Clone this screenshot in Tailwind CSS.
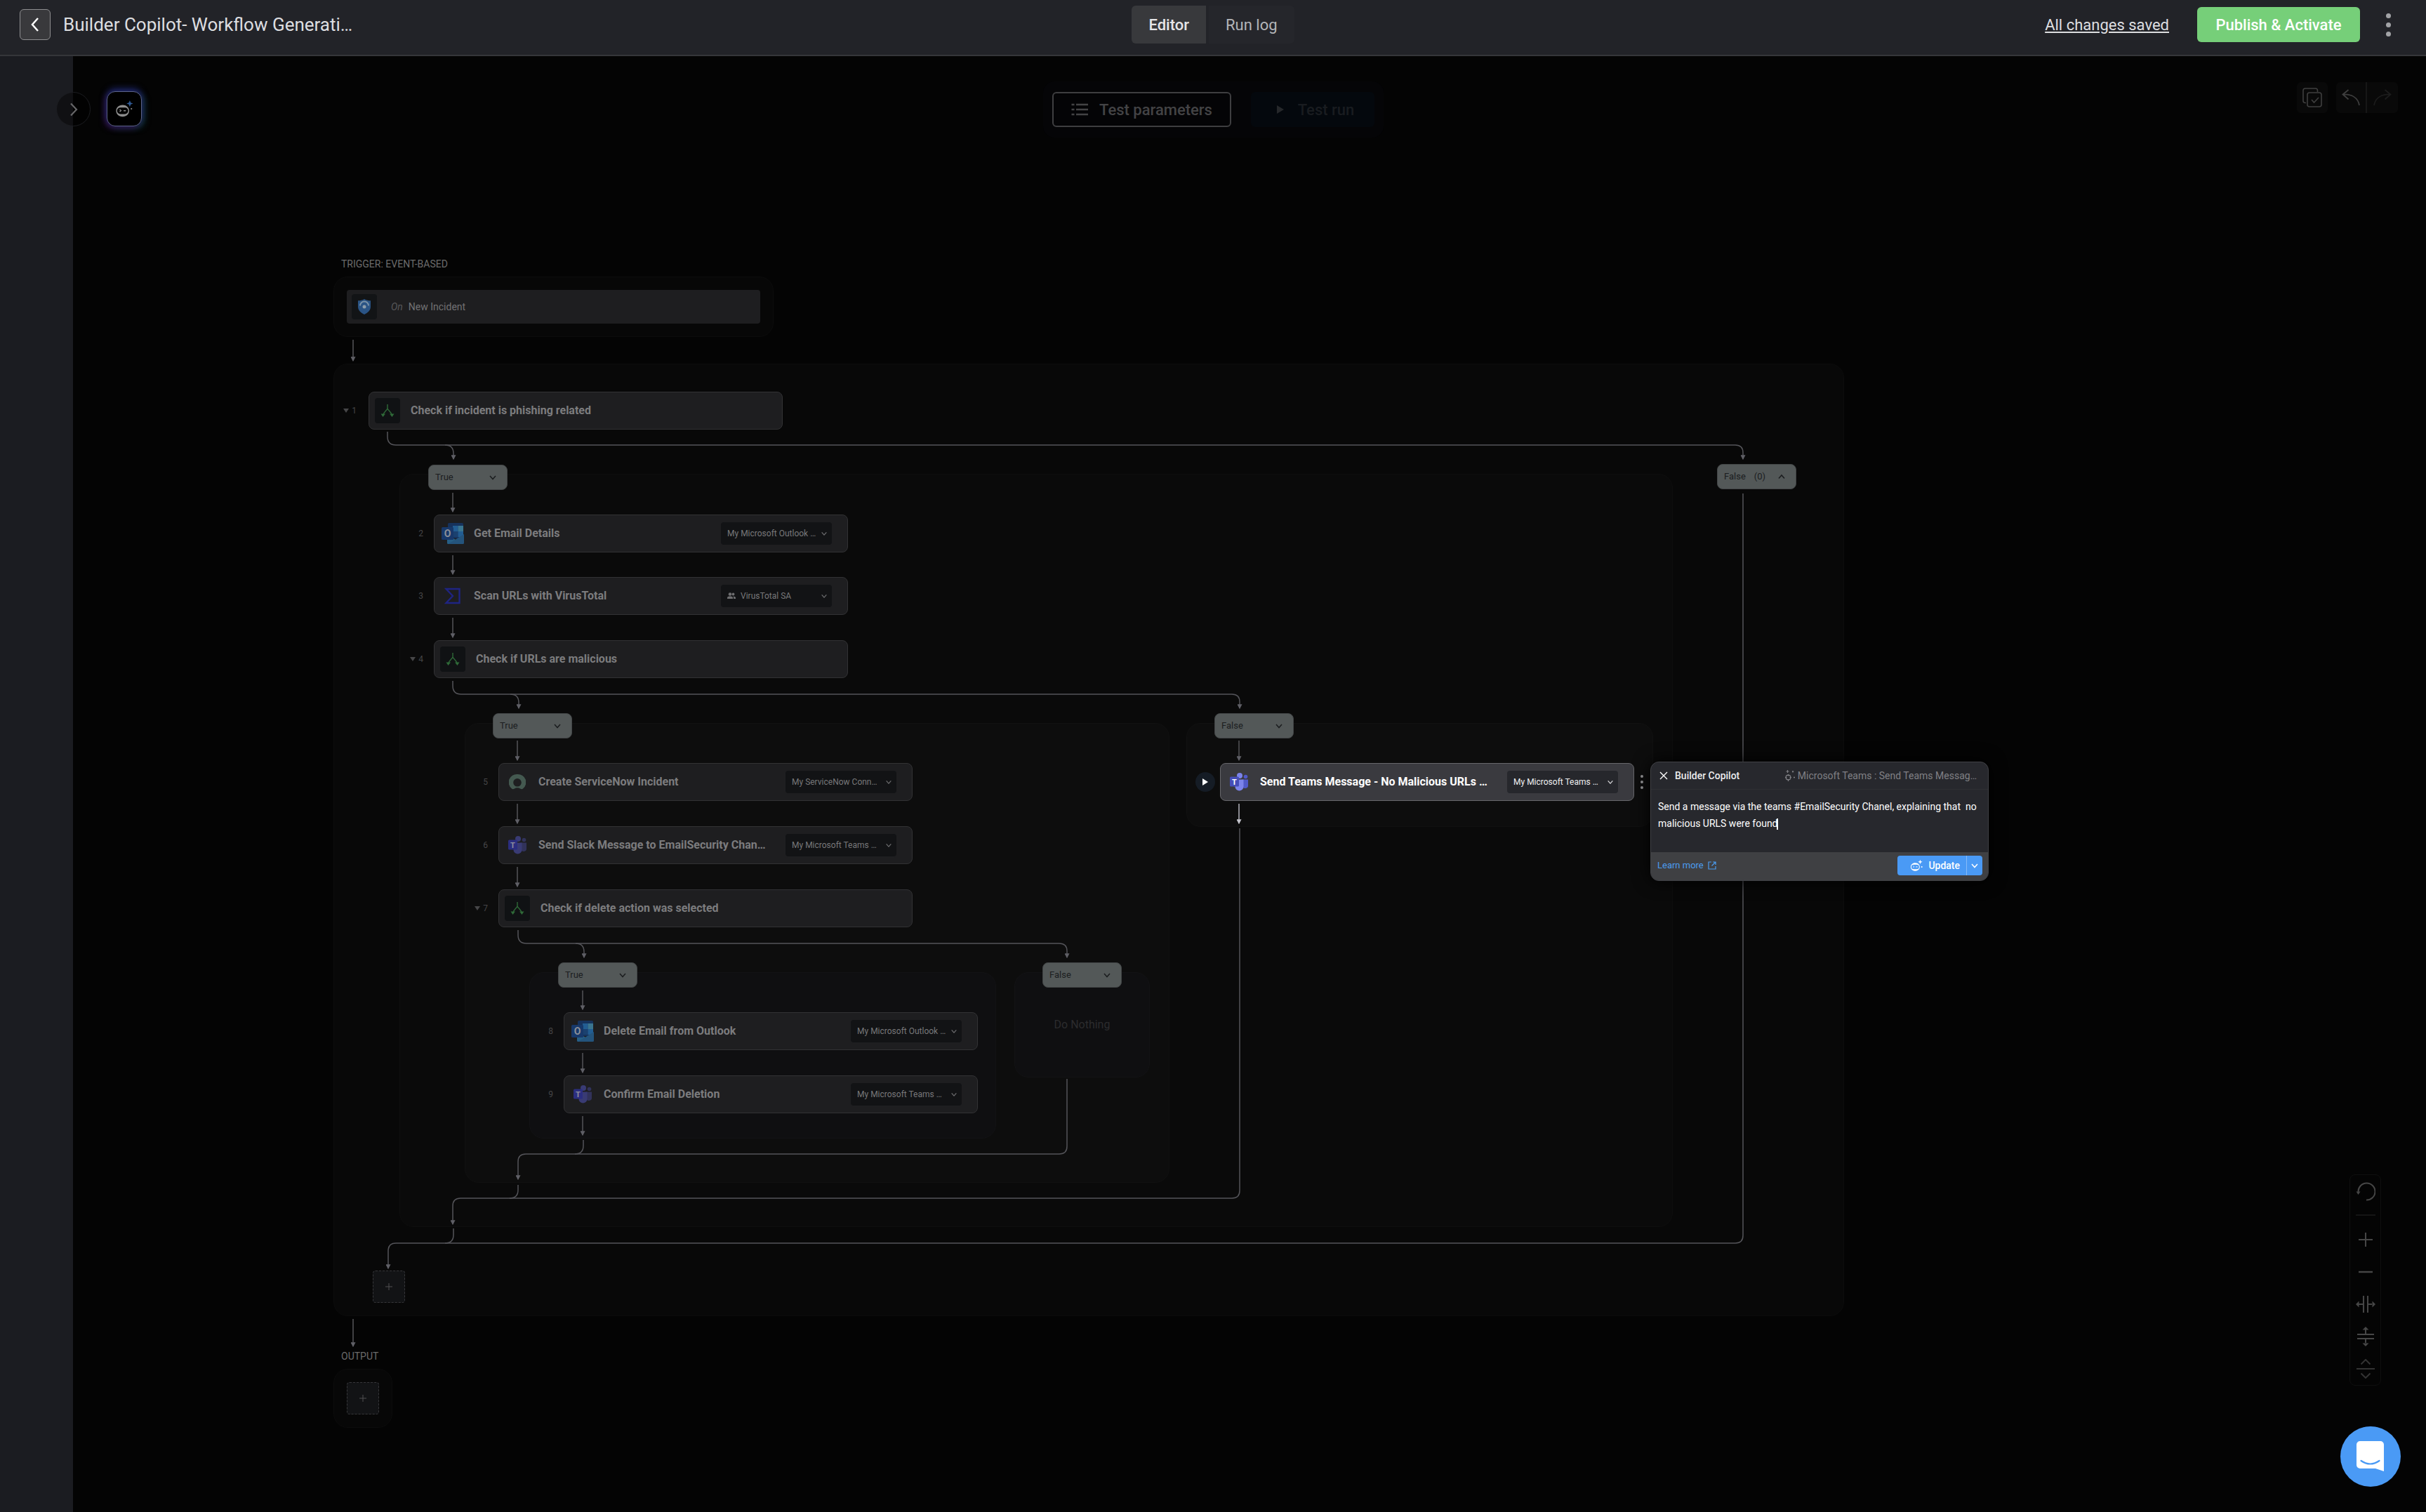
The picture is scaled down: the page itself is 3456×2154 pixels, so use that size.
<!DOCTYPE html>
<html lang="en">
<head>
    <meta charset="UTF-8">
    <meta name="viewport" content="width=device-width, initial-scale=1.0">
    <title>Workflow Builder</title>
    <script src="https://cdn.jsdelivr.net/npm/@tailwindcss/browser@4"></script>
</head>
<body class="flex flex-col min-h-screen bg-[#040404] font-[Roboto,sans-serif] text-white">

    <!-- icon sprite -->
    <svg class="hidden">
        <symbol id="i-down" viewBox="0 0 12 12"><path d="M2 4l4 4.500 4-4.500" fill="none" stroke="currentColor" stroke-width="1.500"/></symbol>
        <symbol id="i-up" viewBox="0 0 12 12"><path d="M2 8.500l4-4.500 4 4.500" fill="none" stroke="currentColor" stroke-width="1.500"/></symbol>
        <symbol id="i-fold" viewBox="0 0 8 6"><path d="M0 0h8L4 6z" fill="currentColor"/></symbol>
        <symbol id="i-branch" viewBox="0 0 20 20">
            <path d="M10 1v6M10 7C9 10 5 11 3.500 17M10 7c1 3 5 4 6.500 10" fill="none" stroke="#2f6a38" stroke-width="1.400"/>
            <path d="M0.500 14.500h6.500L3.500 19zM13 14.500h6.500L16.500 19z" fill="#2f6a38"/>
        </symbol>
        <symbol id="i-outlook" viewBox="0 0 32 32">
            <rect x="9" y="1" width="22" height="22" rx="1.500" fill="#16325c"/>
            <rect x="16" y="5" width="7.500" height="8" fill="#225d92"/>
            <rect x="23.500" y="5" width="7.500" height="8" fill="#3a7590"/>
            <rect x="16" y="13" width="7.500" height="8" fill="#1b416f"/>
            <rect x="23.500" y="13" width="7.500" height="8" fill="#225d92"/>
            <path d="M8 18l23 13H9.500A1.500 1.500 0 0 1 8 29.500z" fill="#265f86"/>
            <path d="M32 17v12.500a1.500 1.500 0 0 1-1.500 1.500H9.500L32 17z" fill="#24547c"/>
            <rect x="0" y="7" width="17" height="18" rx="1.500" fill="#17386a"/>
            <text x="8.500" y="21" text-anchor="middle" font-family="Roboto" font-size="14" font-weight="700" fill="#8b8f98">O</text>
        </symbol>
        <symbol id="i-teams" viewBox="0 0 26 26">
            <g fill="currentColor">
                <circle cx="14" cy="4" r="4"/>
                <circle cx="22.500" cy="5.500" r="2.800" opacity="0.7"/>
                <path d="M18 9.500h8v8a4 4 0 0 1-8 1z" opacity="0.7"/>
                <path d="M7.500 9.500h12v10a6 6 0 0 1-12 0z"/>
            </g>
            <rect x="0" y="5.500" width="13" height="14" rx="1.500" fill="#2b2e80"/>
            <text x="6.500" y="16.500" text-anchor="middle" font-family="Roboto" font-size="11" font-weight="700" fill="#8e8e9c">T</text>
        </symbol>
        <symbol id="i-bot" viewBox="0 0 28 28">
            <path fill-rule="evenodd" d="M11.500 8C5.500 8 1.500 12 1.500 17S5.500 26 11.500 26s10-4 10-9c0-2-.7-3.500-1.600-5C17.500 9 15 8 11.500 8zM8 12h7a5 5 0 0 1 0 10H8a5 5 0 0 1 0-10z" fill="currentColor"/>
            <path d="M7 15l2 1.800-2 1.700M13 17h3.500" fill="none" stroke="currentColor" stroke-width="1.500"/>
        </symbol>
        <symbol id="i-virustotal" viewBox="0 0 24 24"><path d="M2.500 2h19v20h-19l9.500-10z" fill="none" stroke="#1f2482" stroke-width="2.400"/></symbol>
        <symbol id="i-servicenow" viewBox="0 0 24 24">
            <path fill-rule="evenodd" d="M12 1a11.500 11.500 0 0 0-8 20.500c1 .9 2.300.9 3.500.2a8.500 8.500 0 0 1 9 0c1.200.7 2.500.7 3.500-.2A11.500 11.500 0 0 0 12 1zM12 7a5.800 5.800 0 1 1 0 11.600A5.800 5.800 0 0 1 12 7z" fill="#445950"/>
        </symbol>
    </svg>

    <header class="grid grid-cols-3 items-center h-20 pb-2 px-7 bg-[#222328] border-b-2 border-[#35363a]">
        <div class="flex items-center gap-[18px]">
            <button aria-label="Back" class="flex items-center justify-center size-11 rounded-md bg-[#39393c] border border-[#8e8e90]">
                <svg class="size-6" viewBox="0 0 24 24" fill="none" stroke="white" stroke-width="2.500"><path d="M16 3L8 12l8 9"/></svg>
            </button>
            <h1 class="text-[26px] leading-8 text-[#dddee0]">Builder Copilot- Workflow Generati…</h1>
        </div>
        <nav class="flex justify-center gap-1">
            <button class="h-[54px] px-6 rounded-l-md bg-[#38393c] text-[22px] font-medium text-[#e6e6e8]">Editor</button>
            <button class="h-[54px] px-6 rounded-r-md bg-[#25262b] text-[22px] text-[#b4b5b9]">Run log</button>
        </nav>
        <div class="flex items-center justify-end pr-4">
            <a href="#" class="mr-10 text-[22px] text-[#dddee0] underline underline-offset-2 decoration-2">All changes saved</a>
            <button class="h-[50px] w-[232px] mr-[30px] rounded-md bg-[#76cf79] text-[22px] font-medium">Publish &amp; Activate</button>
            <button aria-label="More" class="flex flex-col items-center gap-[6px] w-5">
                <i class="size-[7px] rounded-full bg-[#a2a3a6]"></i>
                <i class="size-[7px] rounded-full bg-[#a2a3a6]"></i>
                <i class="size-[7px] rounded-full bg-[#a2a3a6]"></i>
            </button>
        </div>
    </header>

    <div class="flex flex-1">
        <aside class="w-[104px] shrink-0 bg-[#1b1c21]"></aside>

        <main class="relative flex-1 min-h-[2074px]">

            <!-- canvas controls -->
            <button aria-label="Expand sidebar" class="absolute -left-6 top-[51px] flex items-center justify-center size-[49px] rounded-full bg-black/40 border border-[#1c1d21]">
                <svg class="size-6" viewBox="0 0 24 24" fill="none" stroke="#666668" stroke-width="2.200"><path d="M8 3.500l8 8.500-8 8.500"/></svg>
            </button>
            <button aria-label="Builder Copilot" class="absolute left-12 top-[50px] flex items-center justify-center size-[50px] rounded-xl bg-black border border-[#5c6488] shadow-[0_-4px_10px_#1d2568,-3px_3px_9px_#2d0f44,4px_3px_9px_#103438]">
                <svg class="size-[26px] text-[#8d8d8d]" viewBox="0 0 28 28">
                    <use href="#i-bot"/>
                    <path d="M22.500 1l1.400 3.600 3.600 1.400-3.600 1.400-1.400 3.600-1.400-3.600L17.500 6l3.600-1.400z" fill="#2f5a94"/>
                    <circle cx="25" cy="14" r="1.200" fill="#8d8d8d"/>
                </svg>
            </button>

            <div class="absolute left-[1382px] top-9 flex items-center gap-7 h-20 px-[13px] rounded-2xl bg-[#050507]">
                <button class="flex items-center justify-center gap-4 w-[255px] h-[50px] rounded-md bg-[#040406] border-2 border-[#3e3e40] text-[22px] font-medium text-[#434345]">
                    <svg class="w-6 h-5" viewBox="0 0 24 20" stroke="currentColor" stroke-width="2.400"><path d="M7 3h17M7 10h17M7 17h17M0.500 3h4M0.500 10h4M0.500 17h4"/></svg>
                    Test parameters
                </button>
                <button class="flex items-center justify-center gap-5 w-44 h-[50px] pl-2 rounded-md bg-[#04080d] text-[22px] font-medium text-[#191c20]">
                    <svg class="w-[10px] h-3" viewBox="0 0 10 12" fill="#26282b"><path d="M0 0l10 6-10 6z"/></svg>
                    Test run
                </button>
            </div>

            <div class="absolute right-10 top-[37px] flex gap-3 text-[#3f3f3f]">
                <button aria-label="Select steps" class="flex items-center justify-center size-11 rounded-md bg-[#090909]">
                    <svg class="size-7" viewBox="0 0 28 28" fill="none" stroke="currentColor" stroke-width="1.600"><path d="M5 21.500H4A3 3 0 0 1 1 18.500V4A3 3 0 0 1 4 1h14.500a3 3 0 0 1 3 3v2"/><rect x="7" y="7" width="20" height="20" rx="3"/><path d="M13 17l3.500 4 6.500-7"/></svg>
                </button>
                <div class="flex rounded-md bg-[#090909]">
                    <button aria-label="Undo" class="flex items-center justify-center size-11 border-r-2 border-[#171717]">
                        <svg class="size-[26px]" viewBox="0 0 26 26" fill="none" stroke="currentColor" stroke-width="1.800"><path d="M9.500 2L1.500 8.500l8 7M1.500 8.500C14 8 23 13 25 24"/></svg>
                    </button>
                    <button aria-label="Redo" disabled class="flex items-center justify-center size-11 text-[#1c1c1c]">
                        <svg class="size-[26px]" viewBox="0 0 26 26" fill="none" stroke="currentColor" stroke-width="1.800"><path d="M16.500 2l8 6.500-8 7M24.500 8.500C12 8 3 13 1 24"/></svg>
                    </button>
                </div>
            </div>

            <div class="absolute right-16 top-[1593px] flex flex-col items-center w-[45px] h-[301px] rounded-lg border border-[#0f0f0f] text-[#464646]">
                <button aria-label="Reset view" class="flex items-center justify-center h-[46px]">
                    <svg class="size-7" viewBox="0 0 28 28" fill="none" stroke="currentColor" stroke-width="2"><path d="M3.500 15A12 12 0 1 1 15 26.500"/><path d="M0.500 14.500h6l-3 4.500z" fill="currentColor" stroke="none"/></svg>
                </button>
                <hr class="w-7 my-[11px] border-t-2 border-[#151515]">
                <button aria-label="Zoom in" class="flex items-center justify-center h-[47px]">
                    <svg class="size-5" viewBox="0 0 20 20" stroke="currentColor" stroke-width="2"><path d="M10 0v20M0 10h20"/></svg>
                </button>
                <button aria-label="Zoom out" class="flex items-center justify-center h-[47px]">
                    <svg class="size-5" viewBox="0 0 20 20" stroke="currentColor" stroke-width="2.400"><path d="M0 10h20"/></svg>
                </button>
                <button aria-label="Spread horizontally" class="flex items-center justify-center h-[47px]">
                    <svg class="size-7" viewBox="0 0 28 28" fill="currentColor"><path d="M10 2h2v24h-2zM16 2h2v24h-2zM4 13h7v2H4zM17 13h7v2h-7zM0 14l4.500-4.500v9zM28 14l-4.500-4.500v9z"/></svg>
                </button>
                <button aria-label="Spread vertically" class="flex items-center justify-center h-[47px]">
                    <svg class="size-7 rotate-90" viewBox="0 0 28 28" fill="currentColor"><path d="M10 2h2v24h-2zM16 2h2v24h-2zM4 13h7v2H4zM17 13h7v2h-7zM0 14l4.500-4.500v9zM28 14l-4.500-4.500v9z"/></svg>
                </button>
                <button aria-label="Collapse all" class="flex items-center justify-center h-[47px] text-[#333333]">
                    <svg class="size-7" viewBox="0 0 28 28" fill="none" stroke="currentColor" stroke-width="2"><path d="M7.500 7.500L14 1l6.500 6.500M1 14h26M7.500 20.500L14 27l6.500-6.500"/></svg>
                </button>
            </div>

            <!-- nested scopes -->
            <div class="absolute left-[371px] top-[438px] w-[2152px] h-[1357px] rounded-[20px] bg-[#080808] border border-[#0c0c0c]"></div>
            <div class="absolute left-[465px] top-[595px] w-[1814px] h-[1073px] rounded-[20px] bg-[#0a0a0a] border border-[#0e0e0e]"></div>
            <div class="absolute left-[558px] top-[950px] w-[1004px] h-[655px] rounded-[20px] bg-[#0d0d0d] border border-[#111111]"></div>
            <div class="absolute left-[1586px] top-[950px] w-[665px] h-[148px] rounded-[20px] bg-[#0d0d0d] border border-[#111111]"></div>
            <div class="absolute left-[650px] top-[1305px] w-[665px] h-[237px] rounded-[20px] bg-[#0f0f11] border border-[#131315]"></div>
            <div class="absolute left-[1341px] top-[1305px] flex items-center justify-center w-[193px] h-[150px] rounded-[20px] bg-[#0f0f11] border border-[#131315] text-base text-[#2c2c2e]">Do Nothing</div>

            <!-- edges -->
            <svg class="absolute left-0 top-0 w-[2700px] h-[1860px]" viewBox="0 0 2700 1860" fill="none" stroke="#545459" stroke-width="1.500">
                <defs>
                    <marker id="arrow" viewBox="0 0 6 6" refX="5" refY="3" markerWidth="7" markerHeight="7" markerUnits="userSpaceOnUse" orient="auto"><path d="M0 0l6 3-6 3z" fill="#5f5f66" stroke="none"/></marker>
                    <marker id="arrow-lit" viewBox="0 0 6 6" refX="5" refY="3" markerWidth="7" markerHeight="7" markerUnits="userSpaceOnUse" orient="auto"><path d="M0 0l6 3-6 3z" fill="#c4c4cc" stroke="none"/></marker>
                </defs>
                <g marker-end="url(#arrow)">
                    <path d="M399 404v30"/>
                    <path d="M399 1799v39"/>
                    <path d="M541 622v27"/>
                    <path d="M541 711v27"/>
                    <path d="M541 800v28"/>
                    <path d="M633 975v28"/>
                    <path d="M633 1065v28"/>
                    <path d="M633 1155v28"/>
                    <path d="M726 1331v27"/>
                    <path d="M726 1420v28"/>
                    <path d="M726 1510v27"/>
                    <path d="M1661 975v28"/>
                    <path d="M448 535v7q0 12 12 12H2368q11 0 11 11v9"/>
                    <path d="M530 554q12 0 12 12v8"/>
                    <path d="M541 890v7q0 12 12 12H1651q11 0 11 11v9"/>
                    <path d="M623 909q12 0 12 12v8"/>
                    <path d="M634 1245v7q0 12 12 12H1405q11 0 11 11v9"/>
                    <path d="M716 1264q12 0 12 12v8"/>
                    <path d="M1416 1457v96q0 11-11 11H645q-11 0-11 11v25"/>
                    <path d="M1662 1100v516q0 11-11 11H552q-11 0-11 11v26"/>
                    <path d="M2379 623v1057q0 11-11 11H460q-11 0-11 11v25"/>
                </g>
                <path d="M727 1544v8q0 12-12 12M634 1608v7q0 12-12 12M542 1670v9q0 12-12 12"/>
                <path d="M1661 1065v28" stroke="#b4b4bc" marker-end="url(#arrow-lit)"/>
            </svg>

            <!-- trigger -->
            <h2 class="absolute left-[382px] top-[286px] text-sm text-[#6b6b6b]">TRIGGER: EVENT-BASED</h2>
            <div class="absolute left-[371px] top-[314px] flex items-center w-[627px] h-[86px] px-[18px] rounded-[20px] bg-[#070707] border border-[#0c0c0c]">
                <div class="flex items-center w-full h-12 px-[7px] rounded bg-[#1e1e20] text-sm">
                    <span class="flex items-center justify-center size-9 rounded bg-[#121416]">
                        <svg class="w-[18px] h-[22px]" viewBox="0 0 18 22"><path d="M9 0c3 2 6 2.200 9 2.200V11c0 5-4 8.500-9 11-5-2.500-9-6-9-11V2.200C3 2.200 6 2 9 0z" fill="#2a5485"/><path d="M3 9.500a6 6 0 0 1 12 0" fill="none" stroke="#7b93a8" stroke-width="1.800"/><circle cx="9" cy="11" r="2.500" fill="#8b9cab"/></svg>
                    </span>
                    <i class="ml-5 text-[#58585a]">On</i>
                    <span class="ml-2 text-[#727274]">New Incident</span>
                </div>
            </div>

            <!-- steps -->
            <div class="absolute left-[421px] top-[478px] flex items-center w-[590px] h-[54px] px-2 rounded-lg bg-[#1e1e20] border border-[#323234]">
                <span class="absolute right-full mr-[18px] flex items-center gap-1 text-xs text-[#464648]"><svg class="w-2 h-[6px]"><use href="#i-fold"/></svg>1</span>
                <span class="flex items-center justify-center size-9 rounded bg-[#101214]"><svg class="size-5"><use href="#i-branch"/></svg></span>
                <span class="ml-[15px] text-base font-bold text-[#7c7c7e]">Check if incident is phishing related</span>
            </div>

            <div class="absolute left-[514px] top-[653px] flex items-center w-[590px] h-[54px] pl-2 pr-[22px] rounded-lg bg-[#1e1e20] border border-[#323234]">
                <span class="absolute right-full mr-4 text-xs text-[#464648]">2</span>
                <span class="flex items-center justify-center size-9"><svg class="size-8"><use href="#i-outlook"/></svg></span>
                <span class="ml-3 text-base font-bold text-[#7c7c7e]">Get Email Details</span>
                <div class="relative ml-auto">
                    <select aria-label="Connection" class="appearance-none w-[158px] h-8 pl-[9px] rounded bg-[#121315] text-xs text-[#78787a]"><option>My Microsoft Outlook …</option></select>
                    <svg class="absolute right-[6px] top-[11px] size-[10px] text-[#6e6e70] pointer-events-none"><use href="#i-down"/></svg>
                </div>
            </div>

            <div class="absolute left-[514px] top-[742px] flex items-center w-[590px] h-[54px] pl-2 pr-[22px] rounded-lg bg-[#1e1e20] border border-[#323234]">
                <span class="absolute right-full mr-4 text-xs text-[#464648]">3</span>
                <span class="flex items-center justify-center size-9"><svg class="size-6"><use href="#i-virustotal"/></svg></span>
                <span class="ml-3 text-base font-bold text-[#7c7c7e]">Scan URLs with VirusTotal</span>
                <div class="relative ml-auto">
                    <svg class="absolute left-[9px] top-[11px] w-3 h-[10px] text-[#6e6e70] pointer-events-none" viewBox="0 0 12 10" fill="currentColor"><circle cx="4" cy="2.500" r="2.300"/><circle cx="8.500" cy="2.500" r="1.900"/><path d="M0 9V7.500C0 6 2 5.500 4 5.500S8 6 8 7.500V9zM9 9V7.300c0-.7-.3-1.200-.7-1.600C10.500 5.700 12 6.300 12 7.500V9z"/></svg>
                    <select aria-label="Connection" class="appearance-none w-[158px] h-8 pl-7 rounded bg-[#121315] text-xs text-[#78787a]"><option>VirusTotal SA</option></select>
                    <svg class="absolute right-[6px] top-[11px] size-[10px] text-[#6e6e70] pointer-events-none"><use href="#i-down"/></svg>
                </div>
            </div>

            <div class="absolute left-[514px] top-[832px] flex items-center w-[590px] h-[54px] px-2 rounded-lg bg-[#1e1e20] border border-[#323234]">
                <span class="absolute right-full mr-4 flex items-center gap-1 text-xs text-[#464648]"><svg class="w-2 h-[6px]"><use href="#i-fold"/></svg>4</span>
                <span class="flex items-center justify-center size-9 rounded bg-[#101214]"><svg class="size-5"><use href="#i-branch"/></svg></span>
                <span class="ml-[15px] text-base font-bold text-[#7c7c7e]">Check if URLs are malicious</span>
            </div>

            <div class="absolute left-[606px] top-[1007px] flex items-center w-[590px] h-[54px] pl-2 pr-[22px] rounded-lg bg-[#1e1e20] border border-[#323234]">
                <span class="absolute right-full mr-4 text-xs text-[#464648]">5</span>
                <span class="flex items-center justify-center size-9"><svg class="size-6"><use href="#i-servicenow"/></svg></span>
                <span class="ml-3 text-base font-bold text-[#7c7c7e]">Create ServiceNow Incident</span>
                <div class="relative ml-auto">
                    <select aria-label="Connection" class="appearance-none w-[158px] h-8 pl-[9px] rounded bg-[#121315] text-xs text-[#78787a]"><option>My ServiceNow Conn…</option></select>
                    <svg class="absolute right-[6px] top-[11px] size-[10px] text-[#6e6e70] pointer-events-none"><use href="#i-down"/></svg>
                </div>
            </div>

            <div class="absolute left-[606px] top-[1097px] flex items-center w-[590px] h-[54px] pl-2 pr-[22px] rounded-lg bg-[#1e1e20] border border-[#323234]">
                <span class="absolute right-full mr-4 text-xs text-[#464648]">6</span>
                <span class="flex items-center justify-center size-9"><svg class="size-[26px] text-[#393b74]"><use href="#i-teams"/></svg></span>
                <span class="ml-3 text-base font-bold text-[#7c7c7e]">Send Slack Message to EmailSecurity Chan…</span>
                <div class="relative ml-auto">
                    <select aria-label="Connection" class="appearance-none w-[158px] h-8 pl-[9px] rounded bg-[#121315] text-xs text-[#78787a]"><option>My Microsoft Teams …</option></select>
                    <svg class="absolute right-[6px] top-[11px] size-[10px] text-[#6e6e70] pointer-events-none"><use href="#i-down"/></svg>
                </div>
            </div>

            <div class="absolute left-[606px] top-[1187px] flex items-center w-[590px] h-[54px] px-2 rounded-lg bg-[#1e1e20] border border-[#323234]">
                <span class="absolute right-full mr-4 flex items-center gap-1 text-xs text-[#464648]"><svg class="w-2 h-[6px]"><use href="#i-fold"/></svg>7</span>
                <span class="flex items-center justify-center size-9 rounded bg-[#101214]"><svg class="size-5"><use href="#i-branch"/></svg></span>
                <span class="ml-[15px] text-base font-bold text-[#7c7c7e]">Check if delete action was selected</span>
            </div>

            <div class="absolute left-[699px] top-[1362px] flex items-center w-[590px] h-[54px] pl-2 pr-[22px] rounded-lg bg-[#1e1e20] border border-[#323234]">
                <span class="absolute right-full mr-4 text-xs text-[#464648]">8</span>
                <span class="flex items-center justify-center size-9"><svg class="size-8"><use href="#i-outlook"/></svg></span>
                <span class="ml-3 text-base font-bold text-[#7c7c7e]">Delete Email from Outlook</span>
                <div class="relative ml-auto">
                    <select aria-label="Connection" class="appearance-none w-[158px] h-8 pl-[9px] rounded bg-[#121315] text-xs text-[#78787a]"><option>My Microsoft Outlook …</option></select>
                    <svg class="absolute right-[6px] top-[11px] size-[10px] text-[#6e6e70] pointer-events-none"><use href="#i-down"/></svg>
                </div>
            </div>

            <div class="absolute left-[699px] top-[1452px] flex items-center w-[590px] h-[54px] pl-2 pr-[22px] rounded-lg bg-[#1e1e20] border border-[#323234]">
                <span class="absolute right-full mr-4 text-xs text-[#464648]">9</span>
                <span class="flex items-center justify-center size-9"><svg class="size-[26px] text-[#393b74]"><use href="#i-teams"/></svg></span>
                <span class="ml-3 text-base font-bold text-[#7c7c7e]">Confirm Email Deletion</span>
                <div class="relative ml-auto">
                    <select aria-label="Connection" class="appearance-none w-[158px] h-8 pl-[9px] rounded bg-[#121315] text-xs text-[#78787a]"><option>My Microsoft Teams …</option></select>
                    <svg class="absolute right-[6px] top-[11px] size-[10px] text-[#6e6e70] pointer-events-none"><use href="#i-down"/></svg>
                </div>
            </div>

            <!-- selected step -->
            <div class="absolute left-[1634px] top-[1007px] flex items-center w-[590px] h-[54px] pl-2 pr-[22px] rounded-lg bg-[#3a3a3f] border border-[#67676b]">
                <button aria-label="Run step" class="absolute right-full mr-2 flex items-center justify-center size-7 rounded-full bg-[#151c25]">
                    <svg class="w-2 h-[10px]" viewBox="0 0 8 10" fill="white"><path d="M0 0l8 5-8 5z"/></svg>
                </button>
                <span class="flex items-center justify-center size-9">
                    <svg class="size-[26px]" viewBox="0 0 26 26">
                        <circle cx="14" cy="4" r="4" fill="#7b83eb"/><circle cx="22.500" cy="5.500" r="2.800" fill="#5059c9"/>
                        <path d="M18 9.500h8v8a4 4 0 0 1-8 1z" fill="#5059c9"/><path d="M7.500 9.500h12v10a6 6 0 0 1-12 0z" fill="#7b83eb"/>
                        <rect y="5.500" width="13" height="14" rx="1.500" fill="#464eb8"/>
                        <text x="6.500" y="16.500" text-anchor="middle" font-family="Roboto" font-size="11" font-weight="700" fill="white">T</text>
                    </svg>
                </span>
                <span class="ml-3 text-base font-bold">Send Teams Message - No Malicious URLs …</span>
                <div class="relative ml-auto">
                    <select aria-label="Connection" class="appearance-none w-[158px] h-8 pl-[9px] rounded bg-[#26272c] text-xs text-[#f0f0f2]"><option>My Microsoft Teams …</option></select>
                    <svg class="absolute right-[6px] top-[11px] size-[10px] text-[#dcdcde] pointer-events-none"><use href="#i-down"/></svg>
                </div>
                <button aria-label="Step menu" class="absolute left-full ml-[10px] flex flex-col gap-1">
                    <i class="size-1 rounded-full bg-[#9a9a9c]"></i><i class="size-1 rounded-full bg-[#9a9a9c]"></i><i class="size-1 rounded-full bg-[#9a9a9c]"></i>
                </button>
            </div>

            <!-- branch toggles -->
            <button class="absolute left-[506px] top-[582px] flex items-center justify-between w-[113px] h-9 pl-[9px] pr-[14px] rounded-lg bg-[#535858] border border-[#424546] text-[13px] text-[#1b1d1f]">True <svg class="size-3"><use href="#i-down"/></svg></button>
            <button class="absolute left-[2342px] top-[581px] flex items-center w-[113px] h-9 pl-[9px] pr-[14px] rounded-lg bg-[#535858] border border-[#424546] text-[13px] text-[#1b1d1f]">False <span class="ml-3">(0)</span> <svg class="size-3 ml-auto"><use href="#i-up"/></svg></button>
            <button class="absolute left-[598px] top-[936px] flex items-center justify-between w-[113px] h-9 pl-[9px] pr-[14px] rounded-lg bg-[#535858] border border-[#424546] text-[13px] text-[#1b1d1f]">True <svg class="size-3"><use href="#i-down"/></svg></button>
            <button class="absolute left-[1626px] top-[936px] flex items-center justify-between w-[113px] h-9 pl-[9px] pr-[14px] rounded-lg bg-[#535858] border border-[#424546] text-[13px] text-[#1b1d1f]">False <svg class="size-3"><use href="#i-down"/></svg></button>
            <button class="absolute left-[691px] top-[1291px] flex items-center justify-between w-[113px] h-9 pl-[9px] pr-[14px] rounded-lg bg-[#535858] border border-[#424546] text-[13px] text-[#1b1d1f]">True <svg class="size-3"><use href="#i-down"/></svg></button>
            <button class="absolute left-[1381px] top-[1291px] flex items-center justify-between w-[113px] h-9 pl-[9px] pr-[14px] rounded-lg bg-[#535858] border border-[#424546] text-[13px] text-[#1b1d1f]">False <svg class="size-3"><use href="#i-down"/></svg></button>

            <button aria-label="Add step" class="absolute left-[427px] top-[1730px] flex items-center justify-center size-[46px] rounded bg-[#121315] border border-dashed border-[#37373a]">
                <svg class="size-[10px]" viewBox="0 0 10 10" stroke="#505053"><path d="M5 0v10M0 5h10"/></svg>
            </button>

            <!-- output -->
            <h2 class="absolute left-[382px] top-[1842px] text-sm text-[#6b6b6b]">OUTPUT</h2>
            <div class="absolute left-[371px] top-[1870px] flex items-center justify-center size-[84px] rounded-[20px] bg-[#070707] border border-[#0c0c0c]">
                <button aria-label="Add output" class="flex items-center justify-center size-[46px] rounded bg-[#121315] border border-dashed border-[#37373a]">
                    <svg class="size-[10px]" viewBox="0 0 10 10" stroke="#505053"><path d="M5 0v10M0 5h10"/></svg>
                </button>
            </div>

            <!-- copilot popup -->
            <section class="absolute left-[2247px] top-[1005px] w-[482px] rounded-xl bg-[#27282d] border border-[#404145] overflow-hidden shadow-[0_0_24px_#000000] text-sm">
                <div class="flex items-center h-[39px] pl-3 pr-4 border-b border-[#2e2f33]">
                    <button aria-label="Close"><svg class="size-3" viewBox="0 0 12 12" stroke="white" stroke-width="1.400"><path d="M1 1l10 10M11 1L1 11"/></svg></button>
                    <h3 class="ml-[10px] font-medium text-[#ececee]">Builder Copilot</h3>
                    <svg class="w-[14px] h-4 ml-auto mr-1" viewBox="0 0 14 16" fill="none" stroke="#808085" stroke-width="1.200"><circle cx="4.500" cy="10.500" r="3.400"/><path d="M0 10.500h2.500M6.500 10.500h2.500M4.500 13v3M4.500 6v2.500M3.500 0v4M1.500 2h4M11 1v2.500M10 2.200h2.200M13 9.500v2M12 10.500h2"/></svg>
                    <span class="text-[#808085]">Microsoft Teams : Send Teams Messag…</span>
                </div>
                <div class="relative">
                    <textarea aria-label="Prompt" class="block w-full h-[89px] px-[10px] py-3 resize-none outline-none bg-transparent leading-6 text-white">Send a message via the teams #EmailSecurity Chanel, explaining that  no malicious URLS were found</textarea>
                    <i class="absolute left-[179px] top-[41px] w-[2px] h-4 bg-white"></i>
                </div>
                <div class="flex items-center justify-between h-10 pb-[2px] pl-[9px] pr-2 bg-[#3f4043]">
                    <a href="#" class="flex items-center gap-[6px] text-[13px] text-[#4b9cf0]">Learn more
                        <svg class="size-3" viewBox="0 0 12 12" fill="none" stroke="currentColor" stroke-width="1.200"><path d="M5 1H1v10h10V7M7 1h4v4M11 1L5.500 6.500"/></svg>
                    </a>
                    <div class="flex h-7 rounded bg-[#4a9af5]">
                        <button class="flex items-center gap-2 pl-[18px] pr-[9px] border-r border-[#86bbf8] font-medium">
                            <svg class="size-[18px]" viewBox="0 0 28 28"><use href="#i-bot"/><path d="M22.500 1l1.400 3.600 3.600 1.400-3.600 1.400-1.400 3.600-1.400-3.600L17.500 6l3.600-1.400z" fill="white"/><circle cx="26" cy="17" r="1.500" fill="white"/></svg>
                            Update
                        </button>
                        <button aria-label="More update options" class="flex items-center justify-center w-[22px]"><svg class="size-3"><use href="#i-down"/></svg></button>
                    </div>
                </div>
            </section>

            <button aria-label="Open chat" class="absolute right-9 top-[1952px] flex items-center justify-center size-[86px] rounded-full bg-[#4a9af5]">
                <svg class="w-10 h-11" viewBox="0 0 40 44"><path d="M5 0h29a5 5 0 0 1 5 5v38l-12-4H5a5 5 0 0 1-5-5V5a5 5 0 0 1 5-5z" fill="white"/><path d="M6.500 28q13 9 26 0" fill="none" stroke="#4a9af5" stroke-width="2.200" stroke-linecap="round"/></svg>
            </button>
        </main>
    </div>
</body>
</html>
